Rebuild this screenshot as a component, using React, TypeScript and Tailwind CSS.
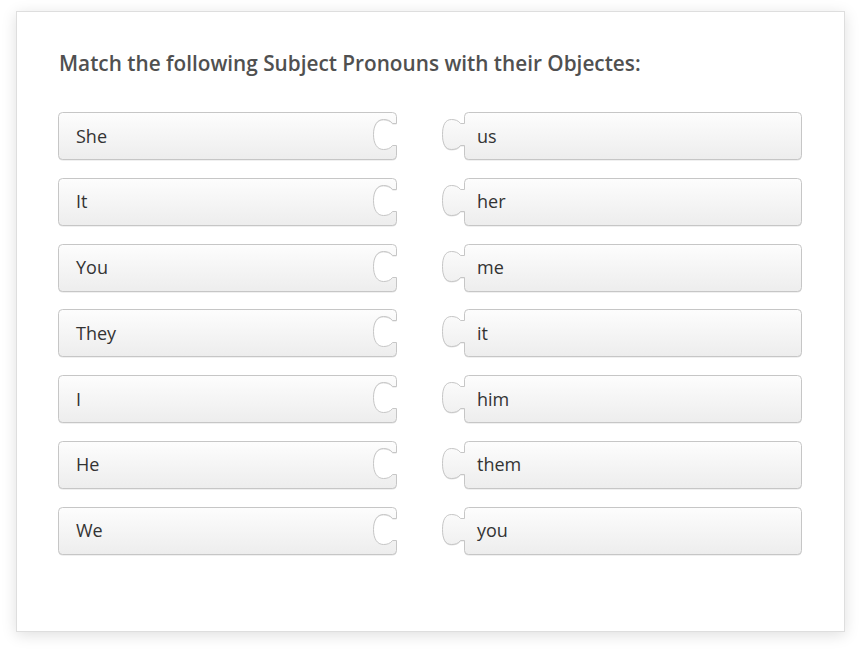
import React from "react";

const subjects = ["She", "It", "You", "They", "I", "He", "We"];
const objects = ["us", "her", "me", "it", "him", "them", "you"];

// left tile: socket (cut-in) on the right edge
const socketPath =
  "M4.5 0.5 H334.5 Q338.5 0.5 338.5 4.5 V11.5 H334.5 C332.5 8.5 329 7.5 325.5 7.5 C319 7.5 315.5 13.5 315.5 22.5 C315.5 31.5 319 37.5 325.5 37.5 C329 37.5 332.5 36.5 334.5 33.5 H338.5 V43.5 Q338.5 47.5 334.5 47.5 H4.5 Q0.5 47.5 0.5 43.5 V4.5 Q0.5 0.5 4.5 0.5 Z";

// right tile: knob sticking out on the left edge
const knobPath =
  "M26.5 0.5 H355.5 Q359.5 0.5 359.5 4.5 V43.5 Q359.5 47.5 355.5 47.5 H26.5 Q22.5 47.5 22.5 43.5 V33.5 H18.5 C16.5 36.5 13 37.5 9.5 37.5 C3 37.5 0.5 31.5 0.5 22.5 C0.5 13.5 3 7.5 9.5 7.5 C13 7.5 16.5 8.5 18.5 11.5 H22.5 V4.5 Q22.5 0.5 26.5 0.5 Z";

function TileShape({ d, width, id }: { d: string; width: number; id: string }) {
  return (
    <svg
      className="absolute inset-0"
      width={width}
      height={49}
      viewBox={`0 0 ${width} 49`}
    >
      <defs>
        <linearGradient id={id} x1="0" y1="0" x2="0" y2="1">
          <stop offset="0" stopColor="#fdfdfd" />
          <stop offset="1" stopColor="#ededed" />
        </linearGradient>
      </defs>
      <path d={d} transform="translate(0 1)" fill="#e2e2e2" />
      <path d={d} fill={`url(#${id})`} stroke="#c6c6c6" strokeWidth="1" />
    </svg>
  );
}

export default function App() {
  return (
    <div className="min-h-screen bg-white pt-[11px] pl-[16px]">
      <div
        className="w-[829px] h-[621px] bg-white border border-[#dedede] shadow-[0_3px_14px_rgba(0,0,0,0.13)] pl-[42px] pt-[37px]"
        style={{ fontFamily: '"Open Sans", "Liberation Sans", sans-serif' }}
      >
        <h2 className="text-[20.75px] leading-[28px] font-semibold text-[#505050]">
          Match the following Subject Pronouns with their Objectes:
        </h2>

        <div className="mt-[35px] -ml-px flex flex-col gap-[16.8px]">
          {subjects.map((s, i) => (
            <div key={s} className="flex gap-[45px]">
              {/* Subject */}
              <div className="relative w-[339px] h-[49px]">
                <TileShape d={socketPath} width={339} id={`gl${i}`} />
                <div className="relative h-[48px] flex items-center pl-[18px] text-[18px] text-[#333]">
                  {s}
                </div>
              </div>
              {/* Object */}
              <div className="relative w-[360px] h-[49px]">
                <TileShape d={knobPath} width={360} id={`gr${i}`} />
                <div className="relative h-[48px] flex items-center pl-[35px] text-[18px] text-[#333]">
                  {objects[i]}
                </div>
              </div>
            </div>
          ))}
        </div>
      </div>
    </div>
  );
}
